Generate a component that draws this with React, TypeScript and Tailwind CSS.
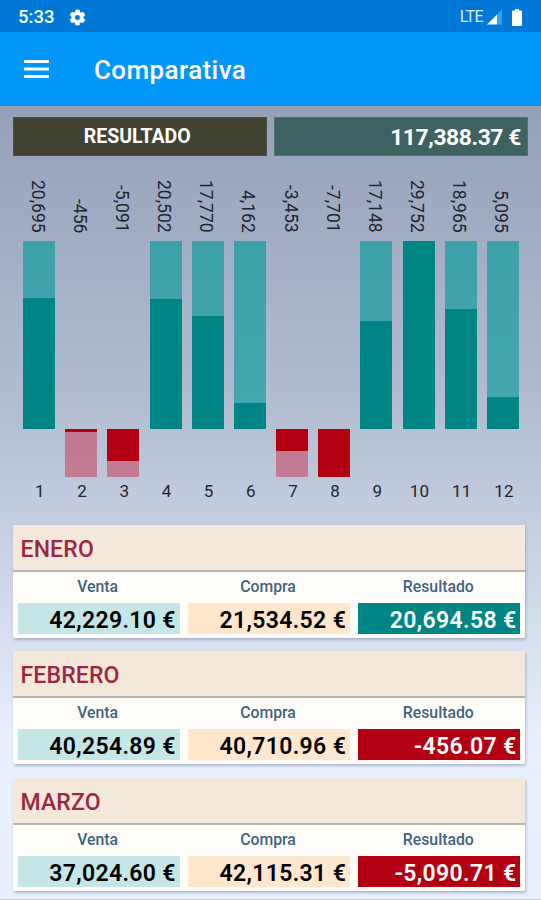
import React from "react";

type Bar = { label: string; value: number; fill: number };

const bars: Bar[] = [
  { label: "20,695", value: 20695, fill: 131 },
  { label: "-456", value: -456, fill: 3 },
  { label: "-5,091", value: -5091, fill: 32 },
  { label: "20,502", value: 20502, fill: 130 },
  { label: "17,770", value: 17770, fill: 113 },
  { label: "4,162", value: 4162, fill: 26 },
  { label: "-3,453", value: -3453, fill: 22 },
  { label: "-7,701", value: -7701, fill: 48 },
  { label: "17,148", value: 17148, fill: 108 },
  { label: "29,752", value: 29752, fill: 188 },
  { label: "18,965", value: 18965, fill: 120 },
  { label: "5,095", value: 5095, fill: 32 },
];

const months = [
  { name: "ENERO", venta: "42,229.10 €", compra: "21,534.52 €", resultado: "20,694.58 €" },
  { name: "FEBRERO", venta: "40,254.89 €", compra: "40,710.96 €", resultado: "-456.07 €" },
  { name: "MARZO", venta: "37,024.60 €", compra: "42,115.31 €", resultado: "-5,090.71 €" },
];

function GearIcon() {
  return (
    <svg viewBox="0 0 24 24" className="ml-[14px] size-[19px]" fill="white" stroke="white" strokeWidth="0.8">
      <path d="M19.14 12.94c.04-.3.06-.61.06-.94 0-.32-.02-.64-.07-.94l2.03-1.58a.49.49 0 0 0 .12-.61l-1.92-3.32a.49.49 0 0 0-.59-.22l-2.39.96a7 7 0 0 0-1.62-.94l-.36-2.54a.48.48 0 0 0-.48-.41h-3.84a.48.48 0 0 0-.47.41l-.36 2.54c-.59.24-1.13.57-1.62.94l-2.39-.96a.48.48 0 0 0-.59.22L2.74 8.87a.48.48 0 0 0 .12.61l2.03 1.58a7 7 0 0 0 0 1.88l-2.03 1.58a.49.49 0 0 0-.12.61l1.92 3.32c.12.22.37.29.59.22l2.39-.96c.5.38 1.03.7 1.62.94l.36 2.54c.05.24.24.41.48.41h3.84c.24 0 .44-.17.47-.41l.36-2.54a7 7 0 0 0 1.62-.94l2.39.96c.22.08.47 0 .59-.22l1.92-3.32a.47.47 0 0 0-.12-.61zM12 15.6a3.6 3.6 0 1 1 0-7.2 3.6 3.6 0 0 1 0 7.2z" />
    </svg>
  );
}

function StatusBar() {
  return (
    <div className="flex h-8 shrink-0 items-center bg-[#0078d8] pt-[2px] pl-[18px] text-white">
      <span className="pt-px text-[18.5px] font-medium">5:33</span>
      <GearIcon />
      <span className="ml-auto text-[16px] tracking-[-0.6px] text-[#d6ecff]">LTE</span>
      <svg viewBox="0 0 16 16" className="ml-[4px] size-4">
        <path d="M0 15.500 10 5.500V15.500Z" fill="white" />
        <path d="M10 5.500 15 0.500V15.500H10Z" fill="#2ea6f0" />
      </svg>
      <svg viewBox="0 0 10 17" className="mr-[19px] ml-[9px] h-[17px] w-[10px]" fill="white">
        <path d="M3 0h4v1.500h2a1 1 0 0 1 1 1V16a1 1 0 0 1-1 1H1a1 1 0 0 1-1-1V2.500a1 1 0 0 1 1-1h2Z" />
      </svg>
    </div>
  );
}

function BarColumn({ bar, index }: { bar: Bar; index: number }) {
  const positive = bar.value >= 0;
  return (
    <div className="flex w-8 flex-col items-center text-[17px] text-[#20262f]">
      <div className="flex h-[85px] items-end justify-center pr-[3px]">
        <span className="mb-2 block text-[17.5px] leading-[20px] [writing-mode:vertical-rl]">{bar.label}</span>
      </div>
      <div className="flex h-[188px] w-8 flex-col justify-end">
        {positive && (
          <div className="flex h-full flex-col justify-end bg-[#009999]/62">
            <div className="bg-[#008585]" style={{ height: bar.fill }} />
          </div>
        )}
      </div>
      <div className="h-[48px] w-8">
        {!positive && (
          <div className="h-full bg-[#c8304c]/50">
            <div className="bg-[#b20012]" style={{ height: bar.fill }} />
          </div>
        )}
      </div>
      <span className="mt-[4px] pl-[2px] leading-5 tracking-[0.2px]">{index + 1}</span>
    </div>
  );
}

function Cell({ title, value, tone }: { title: string; value: string; tone: string }) {
  return (
    <div className="flex-1">
      <div className="h-[31px] pr-[2px] text-center text-[15.8px] leading-[29px] font-medium text-[#42647d]">{title}</div>
      <div className={`h-[31px] pr-[4px] text-right text-[23px] leading-[35px] font-semibold tracking-[0.35px] ${tone}`}>
        {value}
      </div>
    </div>
  );
}

export default function App() {
  return (
    <div className="flex h-[900px] w-[541px] flex-col overflow-hidden bg-[#e8f0ff] font-[Roboto,sans-serif]">
      <StatusBar />
      <header className="flex h-[74px] shrink-0 items-center bg-[#0296f8] pl-6 text-white">
        <svg viewBox="0 0 25 18" className="h-[18px] w-[25px]" stroke="#f2fbff" strokeWidth="3">
          <path d="M0 1.500H25M0 9H25M0 16.500H25" />
        </svg>
        <h1 className="ml-[45px] pt-[3px] text-[26px] font-medium tracking-[0.4px]">Comparativa</h1>
      </header>
      <main className="flex-1 bg-linear-to-b from-[#95a1b9] via-[#b2bdd0] via-38% to-[#e8f0ff] to-80% px-[13px] pt-[11px]">
        <div className="flex gap-[7px]">
          <div className="h-[39px] w-[254px] border border-[#4d4f3e] bg-[#414330] pr-[5px] text-center text-[19.5px] leading-[38px] font-bold text-white">
            RESULTADO
          </div>
          <div className="h-[39px] w-[255px] border border-[#50706f] bg-[#3d6261] pr-[6px] text-right text-[22.800px] leading-[39px] font-bold tracking-[-0.4px] text-white">
            117,388.37 €
          </div>
        </div>
        <div className="ml-[10px] flex h-[369px] w-[496px] justify-between">
          {bars.map((bar, i) => (
            <BarColumn key={i} bar={bar} index={i} />
          ))}
        </div>
        <div className="flex flex-col">
          {months.map((m) => (
            <section
              key={m.name}
              className="mb-[13px] h-[113px] w-[512px] rounded-[2px] bg-[#fffdfa] shadow-[1px_2px_3px_#7885a080] last:mt-px last:mb-0"
            >
              <h2 className="h-[47px] border-b-2 border-[#bdb4a8] bg-[#f3e8da] pl-[7.500px] text-[23px] leading-[49px] font-medium tracking-[0.15px] text-[#9c2745]">
                {m.name}
              </h2>
              <div className="flex gap-[8px] px-[4.500px]">
                <Cell title="Venta" value={m.venta} tone="bg-[#c5e6e7] text-black" />
                <Cell title="Compra" value={m.compra} tone="bg-[#ffe7ce] text-black" />
                <Cell
                  title="Resultado"
                  value={m.resultado}
                  tone={m.resultado.startsWith("-") ? "bg-[#b20012] text-white" : "bg-[#008585] text-white"}
                />
              </div>
            </section>
          ))}
        </div>
      </main>
      <div className="h-px shrink-0 bg-[#c5cbd8]" />
    </div>
  );
}
